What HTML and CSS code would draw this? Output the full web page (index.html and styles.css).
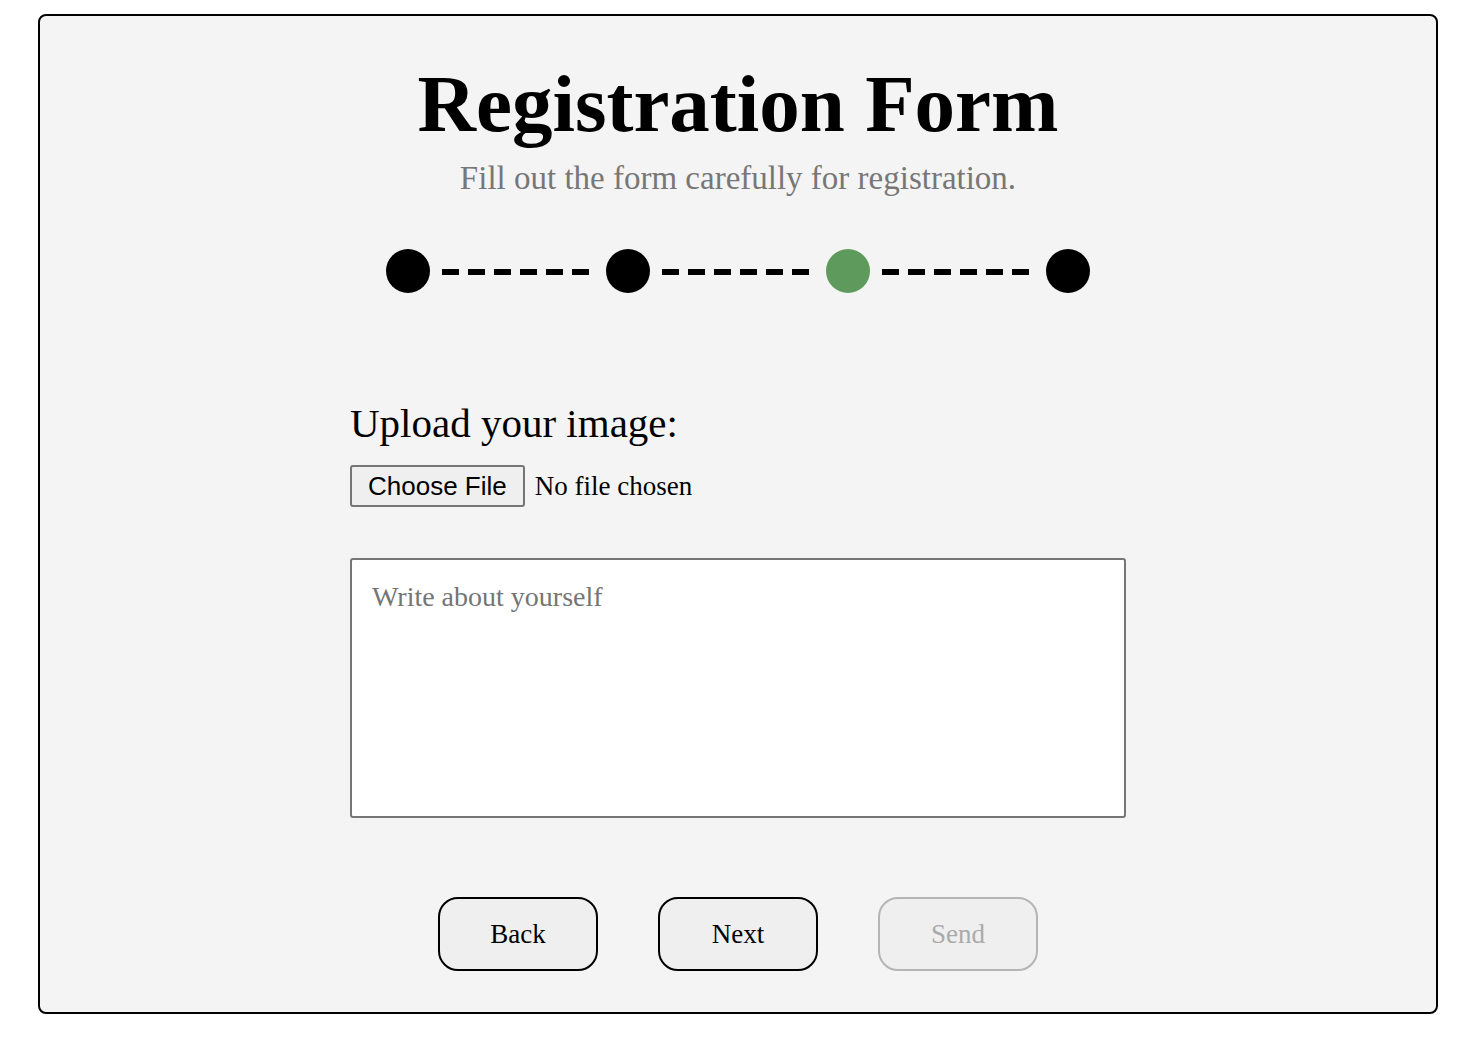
FILE: index.html
```html
<!DOCTYPE html>
<html lang="en">
<head>
<meta charset="utf-8">
<title>Registration Form</title>
<link rel="stylesheet" href="styles.css">
</head>
<body>
<div class="card">
  <h1 class="title">Registration Form</h1>
  <p class="subtitle">Fill out the form carefully for registration.</p>
  <div class="steps">
    <span class="dot"></span>
    <span class="dash"></span>
    <span class="dot"></span>
    <span class="dash"></span>
    <span class="dot active"></span>
    <span class="dash"></span>
    <span class="dot"></span>
  </div>
  <div class="form">
    <label class="label" for="img">Upload your image:</label>
    <div class="file-row">
      <span class="file-btn">Choose File</span>
      <span class="file-name">No file chosen</span>
    </div>
    <textarea class="about" placeholder="Write about yourself"></textarea>
  </div>
  <div class="buttons">
    <button class="btn">Back</button>
    <button class="btn">Next</button>
    <button class="btn disabled">Send</button>
  </div>
</div>
</body>
</html>
```
FILE: styles.css
```css
html, body {
  margin: 0;
  padding: 0;
  background: #ffffff;
}
body {
  font-family: "Liberation Serif", "Times New Roman", serif;
  color: #000;
}
.card {
  box-sizing: border-box;
  width: 1400px;
  height: 1000px;
  margin: 14px 0 0 38px;
  border: 2px solid #000;
  border-radius: 8px;
  background: #f4f4f4;
  padding-top: 48px;
  display: flex;
  flex-direction: column;
  align-items: center;
}
.title {
  margin: 0;
  font-size: 81px;
  line-height: 80px;
  font-weight: bold;
}
.subtitle {
  margin: 18px 0 0;
  font-size: 33px;
  line-height: 32px;
  color: #777;
}
.steps {
  margin-top: 55px;
  display: flex;
  align-items: center;
}
.dot {
  width: 44px;
  height: 44px;
  border-radius: 50%;
  background: #000;
}
.dot.active {
  background: #5d9a5b;
}
.dash {
  width: 152px;
  height: 6px;
  margin: 2px 12px 0;
  background: repeating-linear-gradient(to right, #000 0 17px, transparent 17px 26px);
}
.form {
  width: 776px;
  margin-top: 110px;
  display: flex;
  flex-direction: column;
  align-items: flex-start;
}
.label {
  font-size: 41px;
  line-height: 40px;
}
.file-row {
  margin-top: 22px;
  display: flex;
  align-items: center;
  gap: 10px;
}
.file-btn {
  box-sizing: border-box;
  height: 42px;
  padding: 0 16px;
  display: flex;
  align-items: center;
  font-family: "Liberation Sans", Arial, sans-serif;
  font-size: 26px;
  background: #efefef;
  border: 2px solid #767676;
  border-radius: 3px;
}
.file-name {
  font-size: 27px;
}
.about {
  box-sizing: border-box;
  width: 776px;
  height: 260px;
  margin-top: 51px;
  padding: 21px 20px;
  border: 2px solid #767676;
  border-radius: 3px;
  background: #fff;
  font-family: "Liberation Serif", "Times New Roman", serif;
  font-size: 28px;
  resize: none;
}
.about::placeholder {
  color: #757575;
}
.buttons {
  margin-top: 79px;
  display: flex;
  gap: 60px;
}
.btn {
  box-sizing: border-box;
  width: 160px;
  height: 74px;
  border: 2px solid #000;
  border-radius: 20px;
  background: #efefef;
  font-family: "Liberation Serif", "Times New Roman", serif;
  font-size: 27px;
  color: #000;
}
.btn.disabled {
  border-color: #b5b5b5;
  color: #aaa;
}
```
